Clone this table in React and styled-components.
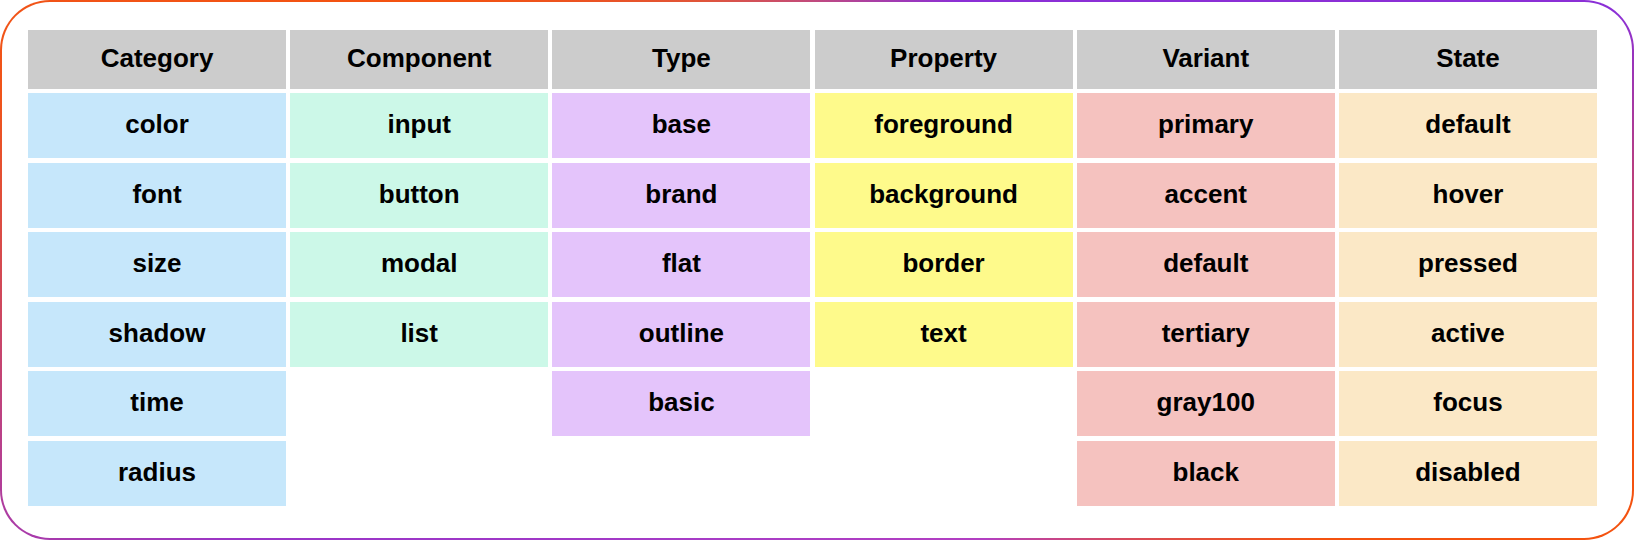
import React from "react";
import styled, { createGlobalStyle } from "styled-components";

const GlobalStyle = createGlobalStyle`
  html, body {
    margin: 0;
    padding: 0;
    background: #ffffff;
  }
  body {
    font-family: "Liberation Sans", Arial, Helvetica, sans-serif;
  }
  * { box-sizing: border-box; }
`;

const Frame = styled.div`
  width: 1634px;
  height: 540px;
  border: 2px solid transparent;
  border-radius: 50px;
  background:
    linear-gradient(#ffffff, #ffffff) padding-box,
    conic-gradient(
      from 0deg at 50% 50%,
      #c04a80 0deg,
      #8b2fd6 28deg,
      #8b2fd6 72deg,
      #f4520f 98deg,
      #f4520f 118deg,
      #b23fc2 148deg,
      #a83cc6 200deg,
      #9a35c8 245deg,
      #f0541a 282deg,
      #f4520f 305deg,
      #e0553a 337deg,
      #c04a80 360deg
    ) border-box;
  padding: 28px 0 0 26px;
`;

const Columns = styled.div`
  display: grid;
  grid-template-columns: repeat(6, 258px);
  column-gap: 4.2px;
  align-items: start;
`;

const Column = styled.div`
  display: flex;
  flex-direction: column;
  gap: 4.6px;
`;

const Cell = styled.div`
  height: ${(p) => (p.$header ? "58.5px" : "65px")};
  background: ${(p) => p.$bg};
  display: flex;
  align-items: center;
  justify-content: center;
  padding-bottom: 2px;
  font-family: "Liberation Sans", Arial, Helvetica, sans-serif;
  font-weight: 700;
  font-size: 26px;
  color: #000000;
`;

const columns = [
  { title: "Category", bg: "#c6e7fb", items: ["color", "font", "size", "shadow", "time", "radius"] },
  { title: "Component", bg: "#ccf8e8", items: ["input", "button", "modal", "list"] },
  { title: "Type", bg: "#e4c4fb", items: ["base", "brand", "flat", "outline", "basic"] },
  { title: "Property", bg: "#fefa8b", items: ["foreground", "background", "border", "text"] },
  { title: "Variant", bg: "#f5c2bf", items: ["primary", "accent", "default", "tertiary", "gray100", "black"] },
  { title: "State", bg: "#fbe8c6", items: ["default", "hover", "pressed", "active", "focus", "disabled"] },
];

export default function App() {
  return (
    <>
      <GlobalStyle />
      <Frame>
        <Columns>
          {columns.map((col) => (
            <Column key={col.title}>
              <Cell $header $bg="#cccccc">{col.title}</Cell>
              {col.items.map((item) => (
                <Cell key={item} $bg={col.bg}>{item}</Cell>
              ))}
            </Column>
          ))}
        </Columns>
      </Frame>
    </>
  );
}
